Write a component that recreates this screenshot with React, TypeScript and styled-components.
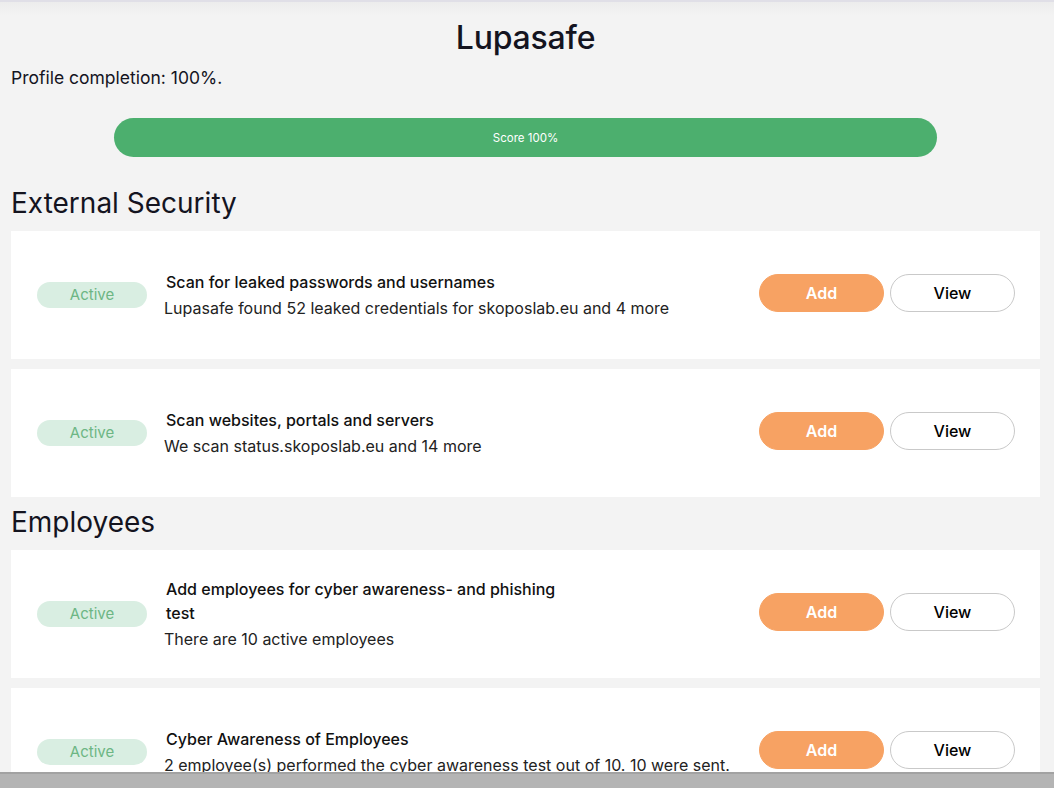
import React from 'react';
import styled, { createGlobalStyle } from 'styled-components';

const colors = {
  page: '#f3f3f3',
  card: '#ffffff',
  text: '#14141f',
  green: '#4caf6e',
  badgeBg: '#d9eee2',
  badgeText: '#6db684',
  orange: '#f7a263',
  border: '#c9c9c9',
};

const GlobalStyle = createGlobalStyle`
  html, body {
    margin: 0;
    padding: 0;
    background: ${colors.page};
    font-family: Inter, 'Liberation Sans', sans-serif;
    color: ${colors.text};
    overflow: hidden;
  }
`;

type Item = {
  title: string;
  text: string;
};

const sections: { name: string; items: Item[] }[] = [
  {
    name: 'External Security',
    items: [
      {
        title: 'Scan for leaked passwords and usernames',
        text: 'Lupasafe found 52 leaked credentials for skoposlab.eu and 4 more',
      },
      {
        title: 'Scan websites, portals and servers',
        text: 'We scan status.skoposlab.eu and 14 more',
      },
    ],
  },
  {
    name: 'Employees',
    items: [
      {
        title: 'Add employees for cyber awareness- and phishing test',
        text: 'There are 10 active employees',
      },
      {
        title: 'Cyber Awareness of Employees',
        text: '2 employee(s) performed the cyber awareness test out of 10. 10 were sent.',
      },
    ],
  },
];

export default function App(): JSX.Element {
  return (
    <>
      <GlobalStyle />
      <Page>
        <Title>Lupasafe</Title>
        <Completion>Profile completion: 100%.</Completion>
        <ScoreBar>Score 100%</ScoreBar>
        {sections.map((section) => (
          <Section key={section.name}>
            <SectionTitle>{section.name}</SectionTitle>
            {section.items.map((item) => (
              <Card key={item.title}>
                <Badge>Active</Badge>
                <Texts>
                  <CardTitle>{item.title}</CardTitle>
                  <CardText>{item.text}</CardText>
                </Texts>
                <Actions>
                  <Button $primary>Add</Button>
                  <Button>View</Button>
                </Actions>
              </Card>
            ))}
          </Section>
        ))}
      </Page>
      <BottomBar />
    </>
  );
}

const Page = styled.div`
  display: flex;
  flex-direction: column;
  padding: 17px 14px 40px 11px;
  min-height: 100vh;
  box-sizing: border-box;
  border-top: 2px solid #e0dfe7;
  background: linear-gradient(#ececec, ${colors.page} 14px);
`;

const Title = styled.h1`
  margin: 0;
  text-align: center;
  font-size: 32px;
  line-height: 38px;
  font-weight: 500;
  letter-spacing: -0.2px;
`;

const Completion = styled.p`
  margin: 9px 0 0;
  font-size: 17.5px;
  line-height: 24px;
  font-weight: 400;
`;

const ScoreBar = styled.div`
  margin: 28px 103px 0;
  height: 39px;
  flex-shrink: 0;
  border-radius: 20px;
  background: ${colors.green};
  color: #fff;
  font-size: 11.5px;
  display: flex;
  align-items: center;
  justify-content: center;
`;

const Section = styled.section`
  display: flex;
  flex-direction: column;
  gap: 10px;
  margin-top: 7px;

  &:first-of-type {
    margin-top: 28px;
  }
`;

const SectionTitle = styled.h2`
  margin: 0;
  font-size: 28px;
  line-height: 36px;
  font-weight: 400;
`;

const Card = styled.div`
  height: 128px;
  background: ${colors.card};
  display: flex;
  align-items: center;
  padding: 0 25px 0 26px;
  flex-shrink: 0;
`;

const Badge = styled.span`
  width: 110px;
  height: 26px;
  margin-bottom: 1px;
  border-radius: 13px;
  background: ${colors.badgeBg};
  color: ${colors.badgeText};
  font-size: 15px;
  display: flex;
  align-items: center;
  justify-content: center;
  flex-shrink: 0;
`;

const Texts = styled.div`
  margin-left: 19px;
  display: flex;
  flex-direction: column;
`;

const CardTitle = styled.div`
  font-size: 16px;
  line-height: 24px;
  font-weight: 500;
  color: #111;
  max-width: 400px;
`;

const CardText = styled.div`
  margin-top: 2px;
  margin-left: -2px;
  font-size: 16px;
  line-height: 24px;
  color: #222;
  white-space: nowrap;
`;

const Actions = styled.div`
  margin-left: auto;
  margin-bottom: 5px;
  display: flex;
  gap: 6px;
`;

const Button = styled.button<{ $primary?: boolean }>`
  width: 125px;
  height: 38px;
  border-radius: 19px;
  font-family: Inter, 'Liberation Sans', sans-serif;
  font-size: 16px;
  font-weight: ${(p) => (p.$primary ? 600 : 500)};
  color: ${(p) => (p.$primary ? '#fff' : '#000')};
  background: ${(p) => (p.$primary ? colors.orange : '#fff')};
  border: 1px solid ${(p) => (p.$primary ? colors.orange : colors.border)};
  cursor: pointer;
`;

const BottomBar = styled.div`
  position: fixed;
  left: 0;
  right: 0;
  bottom: 0;
  height: 14px;
  background: #b4b4b4;
  border-top: 2px solid #a2a2a2;
`;
